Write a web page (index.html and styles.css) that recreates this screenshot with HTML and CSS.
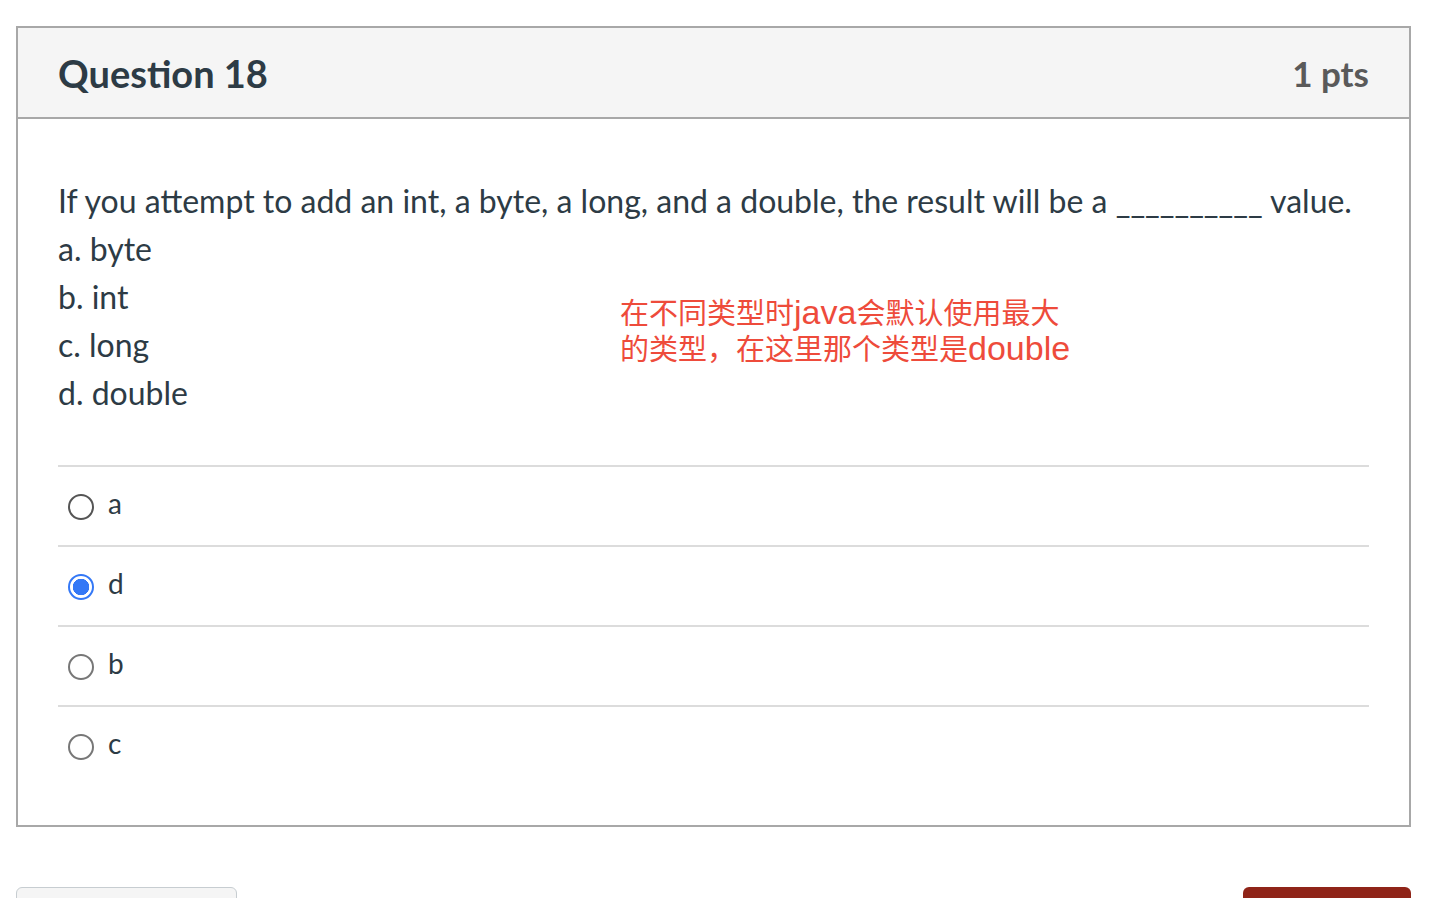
FILE: index.html
```html
<!DOCTYPE html>
<html lang="en">
<head>
<meta charset="utf-8">
<link rel="stylesheet" href="styles.css">
</head>
<body>
<div class="page">
  <div class="question">
    <div class="q-header">
      <h2 class="q-title">Question 18</h2>
      <span class="q-pts">1 pts</span>
    </div>
    <div class="q-body">
      <div class="q-text-wrap">
        <div class="q-text">
          <p class="q-line">If you attempt to add an int, a byte, a long, and a double, the result will be a __________ value.</p>
          <p class="q-line">a. byte</p>
          <p class="q-line">b. int</p>
          <p class="q-line">c. long</p>
          <p class="q-line">d. double</p>
        </div>
        <div class="note">在不同类型时<span class="lat">java</span>会默认使用最大<br>的类型，在这里那个类型是<span class="lat">double</span></div>
      </div>
      <div class="answers">
        <label class="answer"><span class="radio"></span><span class="ans-text">a</span></label>
        <label class="answer"><span class="radio checked"></span><span class="ans-text">d</span></label>
        <label class="answer"><span class="radio"></span><span class="ans-text">b</span></label>
        <label class="answer"><span class="radio"></span><span class="ans-text">c</span></label>
      </div>
    </div>
  </div>
  <div class="nav">
    <span class="btn btn-prev"></span>
    <span class="btn btn-next"></span>
  </div>
</div>
</body>
</html>
```

FILE: styles.css
```css
* { box-sizing: border-box; }
html, body { margin: 0; padding: 0; background: #fff; }
body {
  font-family: Lato, "Open Sans", "Noto Sans CJK SC", sans-serif;
  color: #2d3b45;
  overflow: hidden;
  height: 898px;
}
.page {
  padding: 26px 29px 0 16px;
}
.question {
  border: 2px solid #a8a8a8;
  background: #fff;
}
.q-header {
  height: 91px;
  background: #f5f5f5;
  border-bottom: 2px solid #a8a8a8;
  display: flex;
  align-items: center;
  justify-content: space-between;
  padding: 0 40px 0 40px;
}
.q-title {
  margin: 0;
  font-size: 38px;
  font-weight: 700;
  color: #2d3b45;
}
.q-pts {
  font-size: 35px;
  font-weight: 700;
  color: #5a5a5a;
}
.q-body {
  padding: 58px 40px 40px 40px;
}
.q-text-wrap {
  position: relative;
}
.q-line {
  margin: 0;
  font-size: 32px;
  line-height: 48px;
}
.note {
  position: absolute;
  left: 562px;
  top: 119px;
  color: #ee4b3b;
  font-family: "Liberation Sans", "Noto Sans CJK SC", sans-serif;
  font-size: 29px;
  line-height: 36px;
  white-space: nowrap;
}
.note .lat {
  font-family: "Liberation Sans", sans-serif;
  font-size: 34px;
  line-height: 0;
}
.answers {
  margin-top: 48px;
}
.answer {
  display: flex;
  align-items: center;
  height: 80px;
  border-top: 2px solid #dcdcdc;
  padding-left: 10px;
}
.radio {
  width: 26px;
  height: 26px;
  border-radius: 50%;
  border: 2px solid #555;
  margin-right: 14px;
  margin-top: 2px;
  flex: none;
}
.answer:nth-child(n+3) .radio { border-color: #777; }
.radio.checked {
  border: 2px solid #3478f6;
  background: radial-gradient(circle, #3478f6 0 8px, #fff 8.5px);
}
.ans-text {
  font-size: 28px;
  color: #2d3b45;
  margin-top: -6px;
}
.nav {
  display: flex;
  justify-content: space-between;
  margin-top: 60px;
}
.btn {
  display: block;
  height: 40px;
  border-radius: 6px;
}
.btn-prev {
  width: 221px;
  background: #f5f5f5;
  border: 1px solid #c7cdd1;
}
.btn-next {
  width: 168px;
  background: #8f2418;
}
```
